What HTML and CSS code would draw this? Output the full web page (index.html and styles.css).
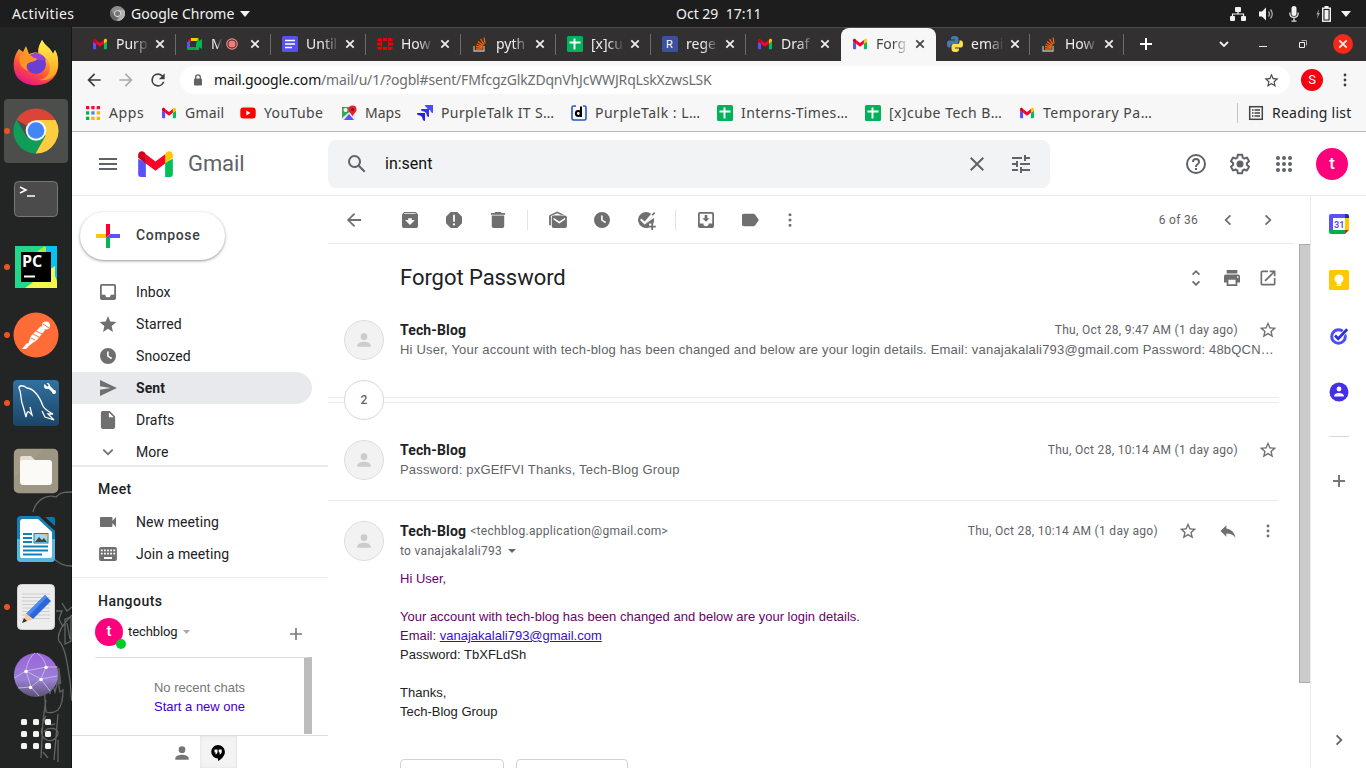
FILE: index.html
```html
<!DOCTYPE html>
<html lang="en">
<head>
<meta charset="utf-8">
<title>Forgot Password - Gmail</title>
<link rel="stylesheet" href="styles.css">
</head>
<body>
<svg class="defs" aria-hidden="true">
  <symbol id="gmail" viewBox="0 0 36 27"><path fill="#5b52f5" d="M0 8v16.500Q0 27 2.500 27H8V12z"/><path fill="#00c05a" d="M28 12v15h5.500Q36 27 36 24.500V8z"/><path fill="#ffc800" d="M28 3.500V13l8-6V4c0-3.500-4-5-6.500-2.800z"/><path fill="#ff0028" d="M8 13V3.500l10 7.500 10-7.500V13l-10 7.500z"/><path fill="#d0001c" d="M0 4v3l8 6V3.500L6.500 1.200C4-1 0 .5 0 4z"/></symbol>
  <symbol id="sheet" viewBox="0 0 16 16"><rect width="16" height="16" rx="1.500" fill="#00b35a"/><path d="M2.500 6.500h11M7.500 2.500v11" stroke="#fff" stroke-width="1.900"/></symbol>
  <symbol id="so" viewBox="0 0 16 16"><path d="M2 10v5h10v-5" fill="none" stroke="#b5b5b5" stroke-width="1.300"/><path d="M4 13h6.500M4 10.500l6.500 1M4.700 8l6 2.500M6 5.500l5.300 4M8.500 3l3.500 5.300M12 1.500l1 6" stroke="#f4660c" stroke-width="1.300"/></symbol>
  <symbol id="x" viewBox="0 0 10 10"><path d="M1.300 1.300l7.400 7.400M8.700 1.300L1.300 8.700" stroke="currentColor" stroke-width="1.800"/></symbol>
  <symbol id="star" viewBox="0 0 24 24"><path d="M22 9.240l-7.190-.62L12 2 9.190 8.630 2 9.240l5.460 4.730L5.820 21 12 17.270 18.180 21l-1.630-7.030L22 9.240zM12 15.400l-3.760 2.270 1-4.280-3.320-2.880 4.380-.38L12 6.100l1.710 4.040 4.380.38-3.320 2.880 1 4.280L12 15.400z"/></symbol>
  <symbol id="dots" viewBox="0 0 24 24"><path d="M12 7.700a1.700 1.700 0 1 0 0-3.400 1.700 1.700 0 0 0 0 3.400zm0 2.600a1.700 1.700 0 1 0 0 3.400 1.700 1.700 0 0 0 0-3.400zm0 6a1.700 1.700 0 1 0 0 3.400 1.700 1.700 0 0 0 0-3.400z"/></symbol>
  <symbol id="clock" viewBox="0 0 24 24"><path d="M12 3a9 9 0 1 0 0 18 9 9 0 0 0 0-18zm3.700 12.600L11 12.700V7h1.800v4.800l3.800 2.300z"/></symbol>
  <symbol id="person" viewBox="0 0 24 24"><path d="M12 12a4 4 0 1 0 0-8 4 4 0 0 0 0 8zm0 2c-2.670 0-8 1.340-8 4v2h16v-2c0-2.660-5.330-4-8-4z"/></symbol>
  <symbol id="right" viewBox="0 0 24 24"><path d="M10 6L8.590 7.410 13.170 12l-4.580 4.590L10 18l6-6z"/></symbol>
  <symbol id="back" viewBox="0 0 24 24"><path d="M20 11H7.830l5.590-5.590L12 4l-8 8 8 8 1.410-1.410L7.830 13H20v-2z"/></symbol>
</svg>

<header class="topbar">
  <span class="activities">Activities</span>
  <div class="appmenu">
    <svg width="15" height="15" viewBox="0 0 16 16"><circle cx="8" cy="8" r="8" fill="#8d8d8d"/><path d="M8 4h7a8 8 0 0 1-7 12l3.500-6z" fill="#b5b5b5"/><path d="M1 4.500L4.800 10 8 12l-1 4A8 8 0 0 1 1 4.500z" fill="#666"/><circle cx="8" cy="8" r="3.600" fill="#ddd"/><circle cx="8" cy="8" r="2.700" fill="#777"/></svg>
    <span>Google Chrome</span>
    <svg width="10" height="6" viewBox="0 0 10 6"><path d="M0 0h10L5 6z" fill="#f2f2f2"/></svg>
  </div>
  <time class="clock">Oct 29&nbsp; 17:11</time>
  <div class="tray">
    <svg width="16" height="14" viewBox="0 0 16 14" fill="#f2f2f2"><rect x="5" width="6" height="5" rx="1"/><rect y="9" width="5" height="5" rx="1"/><rect x="11" y="9" width="5" height="5" rx="1"/><path d="M8 4v3M2.500 10V7h11v3" fill="none" stroke="#f2f2f2" stroke-width="1.200"/></svg>
    <svg width="16" height="14" viewBox="0 0 16 14"><path d="M0 4.500h3L7 .5v13l-4-4H0z" fill="#f2f2f2"/><path d="M9.500 4.500q2 2.500 0 5M11.500 2.500q3.500 4.500 0 9" fill="none" stroke="#aaa" stroke-width="1.300"/></svg>
    <svg width="10" height="16" viewBox="0 0 10 16"><rect x="2.500" width="5" height="10" rx="2.500" fill="#f2f2f2"/><path d="M.8 6.500q0 5 4.200 5t4.200-5M5 11.500V15M2.500 15.200h5" fill="none" stroke="#ddd" stroke-width="1.300"/></svg>
    <svg width="15" height="16" viewBox="0 0 15 16"><path d="M3 3L.3 8.500h1.500L1 13l3-6H2.500z" fill="#999"/><rect x="6.700" y="2.200" width="7.600" height="13" fill="none" stroke="#f2f2f2" stroke-width="1.400"/><path d="M8.500 4h4v9.500h-4zM8.500 0h4v2h-4z" fill="#f2f2f2"/></svg>
    <svg width="10" height="6" viewBox="0 0 10 6"><path d="M0 0h10L5 6z" fill="#f2f2f2"/></svg>
  </div>
</header>

<div class="desktop">
  <nav class="dock">
    <svg class="doodle" width="72" height="280" viewBox="0 0 72 280" fill="none" stroke="#626562" stroke-width="1.300"><path transform="translate(0 -14)" d="M33 38C36 26 46 20 56 23c4-5 9-5 16-5"/><path transform="translate(0 -7)" d="M54 78c6 5 10 7 18 7M62 122l5 8 5-4M56 130l6 0-3 8 4 8M72 134c-8 8-16 18-13 26 6 6 8 20 11 40 1 8 1 16 2 20M65 138l6-2v24l-6 3zM67 142l3 16"/><path d="M46 212l-3 20-2 38M58 226l-4 46M55 236c-8 2-14-2-9-8M42 240c-4 12 12 18 16 6 1-6-10-8-14-2M43 264l5 6M58 252v22"/><path d="M45 212q-1-14 3-16l2 10 2-12 3 10 3-12 2 12 3-2q0 14-5 20-6 4-12 2z"/><path d="M56 178l3 18M58 180l2 16" stroke-width="3" stroke="#5a5d59"/></svg>
    <div class="dock-item"><svg width="46" height="46" viewBox="0 0 46 46"><defs><linearGradient id="ff" x1=".8" y1="0" x2=".3" y2="1"><stop offset="0" stop-color="#fff44f"/><stop offset=".4" stop-color="#ffa32b"/><stop offset=".7" stop-color="#ff4b3e"/><stop offset="1" stop-color="#e3148b"/></linearGradient><linearGradient id="fy" x1=".5" y1="0" x2=".5" y2="1"><stop offset="0" stop-color="#fff44f"/><stop offset="1" stop-color="#ff9a1f"/></linearGradient></defs><path d="M6 9l4 3 3-6 3 8c3-1 6-2 9-1C25 7 28 3 29 0c3 6 9 8 11 14l2-4c4 8 5 20-1 27C33 48 12 48 4 37-2 28 1 15 6 9z" fill="url(#ff)"/><path d="M29 0c-2 4-5 8-2 13 4 4 10 7 10 15 0 7-5 11-11 12 10 2 20-5 19-18 0-5-1-9-3-12l-2 4C38 8 32 6 29 0z" fill="url(#fy)"/><circle cx="23" cy="24" r="10" fill="#6a3fd4"/><path d="M14 21c6-3 12 0 19-1-1-4-6-7-11-7-5 1-8 4-8 8z" fill="#9644dd"/><path d="M7 16c5-3 10-2 14 2 3 0 4 1 1 3-3 1-7 1-8 4-1 2 0 4 1 6C9 29 5 23 7 16z" fill="#ff9424"/></svg></div>
    <div class="dock-item active run"><svg width="46" height="46" viewBox="0 0 46 46"><path d="M23 23L3.500 11.700A22.500 22.500 0 0 1 42.500 12z" fill="#db4437"/><path d="M23 23l-9.500 5.500L3.500 11.700A22.500 22.500 0 0 0 22.500 45.500L33 28z" fill="#0f9d58"/><path d="M23 12h19.500A22.500 22.500 0 0 1 22.500 45.500L32.500 28z" fill="#ffcd40"/><circle cx="23" cy="22.500" r="10.300" fill="#f4f4f4"/><circle cx="23" cy="22.500" r="8.300" fill="#4285f4"/></svg></div>
    <div class="dock-item"><svg width="46" height="38" viewBox="0 0 46 38"><rect x="1.500" y="1.500" width="43" height="35" rx="4" fill="#4b4b4b" stroke="#777" stroke-width="1"/><path d="M7 7l6 3-6 3M14 16h8" fill="none" stroke="#fff" stroke-width="1.600"/></svg></div>
    <div class="dock-item run"><svg width="42" height="42" viewBox="0 0 42 42"><path d="M0 0h42v42H0z" fill="#21d789"/><path d="M18 8L30 0l12 20v10H20z" fill="#a7e84b"/><path d="M31 0h11v36L31 6z" fill="#07c3f2"/><path d="M10 42l30-22v10l2 5v7z" fill="#f5f84a"/><path d="M6 6h30v30H6z"/><text x="7" y="20.500" class="pc">PC</text><path d="M9 29.500h11v2H9z" fill="#fff"/></svg></div>
    <div class="dock-item run"><svg width="46" height="46" viewBox="0 0 46 46"><circle cx="23" cy="23" r="22.500" fill="#ff6c37"/><circle cx="33" cy="13.500" r="4" fill="#fff"/><path d="M28 14l-10 10-3 8 2 1 7-5 8-10zM14 31l-5 6h4l4-4z" fill="#fff"/><path d="M20 22l6 3M23 19l6 3M18 26l4 2M30 12l6 4" stroke="#ff6c37" stroke-width="1"/></svg></div>
    <div class="dock-item run"><svg width="46" height="46" viewBox="0 0 46 46"><defs><linearGradient id="my" x1="0" y1="0" x2="0" y2="1"><stop offset="0" stop-color="#31719f"/><stop offset="1" stop-color="#1c4468"/></linearGradient></defs><rect x="0" y="0" width="46" height="46" rx="4" fill="url(#my)"/><path d="M13 37l-3-11c-3-6-1-12-4-18 0-3 4-3 8 0 8 1 13 10 16 18 2 4 6 6 10 8l-5 0 6 6-9-3-3-6M13 37c1-4 1-6 3-5l3 3-2-8" fill="none" stroke="#fff" stroke-width="1.300"/><path d="M34 5l7 7" stroke="#fff" stroke-width="3"/><circle cx="34" cy="6" r="3" fill="#fff"/><circle cx="41" cy="12" r="2" fill="#fff"/><path d="M31 2l4 4" stroke="#2d6a97" stroke-width="2"/></svg></div>
    <div class="dock-item"><svg width="46" height="46" viewBox="0 0 46 46"><rect x=".8" y=".8" width="44.400" height="44.400" rx="5" fill="#a39a88"/><path d="M1 30L30 1h12l3 3v37l-4 4H5l-4-4z" fill="#9a917f" opacity=".5"/><path d="M7 10q0-2 2-2h9l4 4h15v8H7z" fill="#e5dfd1"/><rect x="7" y="12" width="32" height="25" rx="3" fill="#fcfaf7"/></svg></div>
    <div class="dock-item"><svg width="38" height="46" viewBox="0 0 38 46"><path d="M4 0h18l16 15v27q0 4-4 4H4q-4 0-4-4V4q0-4 4-4z" fill="#1680b6"/><path d="M0 23h38v19q0 4-4 4H4q-4 0-4-4z" fill="#58b6df"/><path d="M28 1h8q2 0 2 2v7z" fill="#0b76ac"/><path d="M6 3h15l14 13v24q0 2-2 2H6q-3 0-3-2V6q0-3 3-3z" fill="#fff"/><path d="M6 18h9M6 22h9M6 26h9M6 30.500h25M6 34.500h25M6 38.500h19" stroke="#1680b6" stroke-width="1.800"/><rect x="17" y="17.500" width="14" height="9.500" fill="#a8d5ec" stroke="#1680b6"/><path d="M18 26l4-5 3 3 2-2 3 4z" fill="#444"/><path d="M27 18h3.500v3z" fill="#f5b82e"/></svg></div>
    <div class="dock-item run"><svg width="38" height="46" viewBox="0 0 38 46"><rect x=".5" y=".5" width="37" height="45" rx="4" fill="#ededed" stroke="#d2d2d2"/><path d="M5 10h28M5 13.500h28M5 17h28M5 20.500h28M5 24h28M5 27.500h28M5 31h28M5 34.500h28" stroke="#ccc"/><path d="M28 11l6 6-18 18-7-5z" fill="#2c67d8"/><path d="M28 11l2 2-19 20-2-3z" fill="#4c8af0"/><path d="M9 29.500l7 5.500-10 4z" fill="#f8cca0"/><path d="M5 39l2-5 3 3z" fill="#333"/></svg></div>
    <div class="dock-item"><svg width="46" height="46" viewBox="0 0 46 46"><defs><linearGradient id="gl" x1="0" y1="0" x2="0" y2="1"><stop offset="0" stop-color="#9b64da"/><stop offset=".6" stop-color="#9a80d6"/><stop offset="1" stop-color="#5b5270"/></linearGradient></defs><circle cx="23" cy="23" r="22" fill="url(#gl)"/><path d="M1 26l12-7L33 15l11 0M13 19l5 16 10-8 5-12M13 19l15 8 16-3M13 19C14 10 18 4 22 1M33 15C32 8 28 4 24 1M18 35l-13 1M18 35l8 9M28 27l9 12" fill="none" stroke="#cbb8ee" stroke-width=".9"/><g fill="#fff"><circle cx="13" cy="19.500" r="1.800"/><circle cx="33" cy="15.500" r="1.800"/><circle cx="28" cy="27.500" r="1.800"/><circle cx="17.500" cy="35.500" r="1.800"/></g></svg></div>
    <div class="dock-item launcher"><svg width="30" height="30" viewBox="0 0 30 30" fill="#f3f3f1"><rect width="6" height="6" rx="1.500"/><rect x="12" width="6" height="6" rx="1.500"/><rect x="24" width="6" height="6" rx="1.500"/><rect y="12" width="6" height="6" rx="1.500"/><rect x="12" y="12" width="6" height="6" rx="1.500"/><rect x="24" y="12" width="6" height="6" rx="1.500"/><rect y="24" width="6" height="6" rx="1.500"/><rect x="12" y="24" width="6" height="6" rx="1.500"/><rect x="24" y="24" width="6" height="6" rx="1.500"/></svg></div>
  </nav>

  <div class="browser">
    <div class="tabs">
      <div class="tab"><svg class="fav"><use href="#gmail" x="1" y="2" width="14" height="12"/></svg><span>Purp</span><svg class="close"><use href="#x"/></svg></div>
      <div class="tab"><svg class="fav" viewBox="0 0 16 16"><path d="M4 2h7v3H4z" fill="#ffc800"/><path d="M0 6l4-4v4z" fill="#f0102b"/><path d="M0 6h3v5H0z" fill="#5b52f5"/><path d="M3 11h8v3H1q-1 0-1-1v-2z" fill="#00a84d"/><path d="M11 2q1 0 1 1v2l3-2v10l-3-2v2q0 1-1 1H9V8z" fill="#00b852"/></svg><span class="meet-title">M</span><svg class="rec" viewBox="0 0 12 12"><circle cx="6" cy="6" r="5.200" fill="none" stroke="#f28b82" stroke-width="1.200"/><circle cx="6" cy="6" r="3.500" fill="#f97a78"/></svg><svg class="close"><use href="#x"/></svg></div>
      <div class="tab"><svg class="fav" viewBox="0 0 16 16"><rect width="16" height="16" rx="1.500" fill="#5850ee"/><path d="M3 4.500h10M3 8h10M3 11.500h7" stroke="#fff" stroke-width="1.600"/></svg><span>Until</span><svg class="close"><use href="#x"/></svg></div>
      <div class="tab"><svg class="fav" viewBox="0 0 16 16"><path d="M6 2h4v3H6zM6 11h4v3H6zM0 6.500h4v3H0zM12 6.500h4v3h-4zM0 5q0-3 4-3v3zM12 2q4 0 4 3h-4zM0 11h4v3Q0 14 0 11zM12 11h4q0 3-4 3z" fill="#f00000"/><path d="M4.500 2v12M11.500 2v12" stroke="#f00000"/></svg><span>How</span><svg class="close"><use href="#x"/></svg></div>
      <div class="tab"><svg class="fav"><use href="#so"/></svg><span>pyth</span><svg class="close"><use href="#x"/></svg></div>
      <div class="tab"><svg class="fav"><use href="#sheet"/></svg><span>[x]cu</span><svg class="close"><use href="#x"/></svg></div>
      <div class="tab"><svg class="fav" viewBox="0 0 16 16"><rect width="16" height="16" rx="1.500" fill="#3d50a0"/><text x="4" y="12" class="fav-r">R</text></svg><span>rege</span><svg class="close"><use href="#x"/></svg></div>
      <div class="tab nosep"><svg class="fav"><use href="#gmail" x="1" y="2" width="14" height="12"/></svg><span>Draf</span><svg class="close"><use href="#x"/></svg></div>
      <div class="tab selected"><svg class="fav"><use href="#gmail" x="1" y="2" width="14" height="12"/></svg><span>Forg</span><svg class="close"><use href="#x"/></svg></div>
      <div class="tab after"><svg class="fav" viewBox="0 0 16 16"><path d="M8 0c-4 0-4 1.500-4 3.500h4v1H2Q0 4.500 0 8t2 3.500h1.500V10q0-2 2-2h4Q11.500 8 11.500 6V3Q11.500 0 8 0z" fill="#3f7cb0"/><path d="M8 16c4 0 4-1.500 4-3.500H8v-1h6q2 0 2-3.500t-2-3.500h-1.500V6q0 2-2 2h-4q-2 0-2 2v3Q4.500 16 8 16z" fill="#ffdf50"/></svg><span>emai</span><svg class="close"><use href="#x"/></svg></div>
      <div class="tab last"><svg class="fav"><use href="#so"/></svg><span>How</span><svg class="close"><use href="#x"/></svg></div>
      <svg class="newtab" width="12" height="12" viewBox="0 0 12 12"><path d="M6 0v12M0 6h12" stroke="#fff" stroke-width="2"/></svg>
      <div class="winctl">
        <svg width="10" height="7" viewBox="0 0 10 7"><path d="M1 1l4 4 4-4" fill="none" stroke="#eee" stroke-width="1.900"/></svg>
        <svg width="8" height="6" viewBox="0 0 8 6"><path d="M0 5.500h8" stroke="#eee"/></svg>
        <svg width="8" height="8" viewBox="0 0 8 8"><path d="M.5 2.500h5v5h-5z" fill="none" stroke="#eee"/><path d="M2.500.5h5v5" fill="none" stroke="#aaa"/></svg>
        <div class="winclose"><svg width="10" height="10"><use href="#x"/></svg></div>
      </div>
    </div>

    <div class="addressbar">
      <svg class="nav-ico" viewBox="0 0 24 24"><use href="#back" width="24" height="24"/></svg>
      <svg class="nav-ico dim" viewBox="0 0 24 24"><use href="#back" width="24" height="24" transform="matrix(-1 0 0 1 24 0)"/></svg>
      <svg class="nav-ico" viewBox="0 0 24 24"><path d="M17.650 6.350A7.950 7.950 0 0 0 12 4a8 8 0 1 0 7.730 10h-2.080A6 6 0 1 1 12 6c1.660 0 3.140.69 4.220 1.780L13 11h7V4l-2.350 2.350z"/></svg>
      <div class="omnibox">
        <svg width="8" height="12" viewBox="0 0 8 12"><rect y="4.500" width="8" height="7" rx="1" fill="#5f6368"/><path d="M1.700 5V3q0-2.200 2.300-2.200T6.300 3v2" fill="none" stroke="#5f6368" stroke-width="1.300"/></svg>
        <span class="url"><b>mail.google.com</b>/mail/u/1/?ogbl#sent/FMfcgzGlkZDqnVhJcWWJRqLskXzwsLSK</span>
        <svg class="bm-star" width="17" height="17"><use href="#star"/></svg>
      </div>
      <div class="profile">S</div>
      <svg class="menu" width="20" height="20"><use href="#dots"/></svg>
    </div>

    <div class="bookmarks">
      <div class="bm w-apps"><svg viewBox="0 0 16 16"><path d="M1 1h3.300v3.300H1zM6.300 1h3.300v3.300H6.300zM11.700 1H15v3.300h-3.300z" fill="#f0102b"/><path d="M1 6.300h3.300v3.300H1z" fill="#00b050"/><path d="M6.300 6.300h3.300v3.300H6.300z" fill="#4285f4"/><path d="M11.700 6.300H15v3.300h-3.300zM6.300 11.700h3.300V15H6.300zM11.700 11.700H15V15h-3.300z" fill="#fbb400"/><path d="M1 11.700h3.300V15H1z" fill="#00b050"/></svg><span>Apps</span></div>
      <div class="bm w-gm"><svg><use href="#gmail" x="1" y="2" width="14" height="12"/></svg><span>Gmail</span></div>
      <div class="bm w-yt"><svg viewBox="0 0 16 16"><rect x=".3" y="2.500" width="15.400" height="11" rx="3" fill="#f00"/><path d="M6.300 5.500v5l4.200-2.500z" fill="#fff"/></svg><span>YouTube</span></div>
      <div class="bm w-mp"><svg viewBox="0 0 16 16"><path d="M1 2h12v12H1z" fill="#31a853"/><path d="M1 13L12 4l2 9v2H2z" fill="#e6e6e6"/><path d="M3 15l5-6 5 6z" fill="#5b52f5"/><circle cx="4.500" cy="5" r="2" fill="#fff"/><path d="M7.500 4.500a4 4 0 0 1 8 0c0 3-3 4-4 7-1-3-4-4-4-7z" fill="#ee1c32"/><circle cx="11.500" cy="4.500" r="1.500" fill="#7c0a14"/></svg><span>Maps</span></div>
      <div class="bm w-pt"><svg viewBox="0 0 16 16"><path d="M8 0h8v8q-2.500 0-2.500-3V2.500H11Q8 2.500 8 0z" fill="#4b4bff"/><path d="M9 1h6v6l-2-2h-2z" fill="#4b4bff"/><path d="M4 4h8v8q-2.500 0-2.500-3V6.500H7Q4 6.500 4 4z" fill="#3432ef"/><path d="M6 5h5v6l-2-3z" fill="#3432ef"/><path d="M0 8h8v8q-2.500 0-2.500-3v-2.500H3Q0 10.500 0 8z" fill="#2b20d8"/><path d="M2 9h5v6l-2-3z" fill="#2b20d8"/></svg><span>PurpleTalk IT S…</span></div>
      <div class="bm w-d"><svg viewBox="0 0 16 16"><path d="M5 1H2.500Q1 1 1 2.500v11Q1 15 2.500 15h11q1.500 0 1.500-1.500v-11Q15 1 13.500 1H12" fill="none" stroke="#2557c6" stroke-width="1.600"/><circle cx="7.300" cy="8.500" r="2.400" fill="none" stroke="#000" stroke-width="2"/><path d="M10 1.500v10.500" stroke="#000" stroke-width="2"/></svg><span>PurpleTalk : L…</span></div>
      <div class="bm w-sh"><svg><use href="#sheet"/></svg><span>Interns-Times…</span></div>
      <div class="bm w-cu"><svg><use href="#sheet"/></svg><span>[x]cube Tech B…</span></div>
      <div class="bm w-tp"><svg><use href="#gmail" x="1" y="2" width="14" height="12"/></svg><span>Temporary Pa…</span></div>
      <div class="bm reading"><svg viewBox="0 0 16 16"><rect x="1.700" y="1.700" width="12.600" height="12.600" fill="none" stroke="#444" stroke-width="1.500"/><path d="M4 5h1.500M6.500 5H12M4 8h1.500M6.500 8H12M4 11h1.500M6.500 11H12" stroke="#444" stroke-width="1.300"/></svg><span>Reading list</span></div>
    </div>

    <div class="gmail">
      <header class="ghead">
        <svg class="burger" width="18" height="12" viewBox="0 0 18 12"><path d="M0 1h18M0 6h18M0 11h18" stroke="#5f6368" stroke-width="2"/></svg>
        <svg class="logo" width="35" height="26"><use href="#gmail"/></svg>
        <span class="brand">Gmail</span>
        <div class="search">
          <svg width="24" height="24" viewBox="0 0 24 24"><path d="M20.490 19l-5.730-5.730C15.530 12.200 16 10.910 16 9.500A6.500 6.500 0 1 0 9.500 16c1.410 0 2.700-.47 3.770-1.240L19 20.490 20.490 19zM5 9.500a4.500 4.500 0 1 1 9 0 4.500 4.500 0 0 1-9 0z"/></svg>
          <span>in:sent</span>
          <svg width="24" height="24" viewBox="0 0 24 24"><path d="M19 6.410L17.590 5 12 10.590 6.410 5 5 6.410 10.590 12 5 17.590 6.410 19 12 13.410 17.590 19 19 17.590 13.410 12z"/></svg>
          <svg class="tune" width="24" height="24" viewBox="0 0 24 24"><path d="M3 17v2h6v-2H3zM3 5v2h10V5H3zm10 16v-2h8v-2h-8v-2h-2v6h2zM7 9v2H3v2h4v2h2V9H7zm14 4v-2H11v2h10zm-6-4h2V7h4V5h-4V3h-2v6z"/></svg>
        </div>
        <div class="gtools">
          <div><svg width="24" height="24" viewBox="0 0 24 24"><path d="M11 18h2v-2h-2v2zm1-16a10 10 0 1 0 0 20 10 10 0 0 0 0-20zm0 18a8 8 0 1 1 0-16 8 8 0 0 1 0 16zm0-14a4 4 0 0 0-4 4h2a2 2 0 1 1 4 0c0 2-3 1.750-3 5h2c0-2.250 3-2.500 3-5a4 4 0 0 0-4-4z"/></svg></div>
          <div><svg width="24" height="24" viewBox="0 0 24 24"><path d="M13.850 22.250h-3.700c-.74 0-1.360-.54-1.450-1.270l-.27-1.890c-.27-.14-.53-.29-.79-.46l-1.800.72c-.7.26-1.470-.03-1.810-.65L2.200 15.530c-.35-.66-.2-1.440.36-1.880l1.530-1.190c-.01-.15-.02-.3-.02-.46 0-.15.01-.31.02-.46l-1.520-1.190c-.59-.45-.74-1.260-.37-1.880l1.850-3.190c.34-.62 1.110-.9 1.790-.63l1.810.73c.26-.17.52-.32.78-.46l.27-1.910c.09-.7.710-1.250 1.440-1.250h3.700c.74 0 1.360.54 1.450 1.270l.27 1.890c.27.14.53.29.79.46l1.800-.72c.71-.26 1.480.03 1.820.65l1.840 3.180c.36.66.2 1.440-.36 1.880l-1.520 1.190c.01.15.02.3.02.46s-.01.31-.02.46l1.520 1.190c.56.45.72 1.230.37 1.860l-1.860 3.220c-.34.62-1.110.9-1.800.63l-1.800-.72c-.26.17-.52.32-.78.46l-.27 1.910c-.1.680-.72 1.220-1.460 1.220zm-3.230-2h2.760l.37-2.550.53-.22c.44-.18.88-.44 1.340-.78l.45-.34 2.380.96 1.380-2.400-2.030-1.580.07-.56c.03-.26.06-.51.06-.78s-.03-.53-.06-.78l-.07-.56 2.030-1.580-1.390-2.400-2.390.96-.45-.35c-.42-.32-.87-.58-1.330-.77l-.52-.22-.37-2.550h-2.760l-.37 2.550-.53.210c-.44.190-.88.440-1.340.790l-.45.330-2.380-.95-1.390 2.390 2.030 1.580-.07.560a7 7 0 0 0-.06.790c0 .26.02.53.06.780l.07.560-2.030 1.580 1.380 2.400 2.390-.96.45.350c.43.330.86.580 1.330.770l.53.220.38 2.550z"/><circle cx="12" cy="12" r="3.500"/></svg></div>
          <div><svg width="16" height="16" viewBox="0 0 16 16"><g id="r3"><circle cx="2" cy="2" r="2"/><circle cx="8" cy="2" r="2"/><circle cx="14" cy="2" r="2"/></g><use href="#r3" y="6"/><use href="#r3" y="12"/></svg></div>
          <div class="me">t</div>
        </div>
      </header>

      <div class="gbody">
        <aside class="side">
          <button class="compose"><svg width="24" height="24" viewBox="0 0 24 24"><path d="M10 0h4v10l-4 4z" fill="#ff0028"/><path d="M0 10h10v4H0z" fill="#ffc800"/><path d="M14 10h10v4H10z" fill="#5b52f5"/><path d="M10 14h4v10h-4z" fill="#00b852"/></svg><span>Compose</span></button>
          <nav class="folders">
            <a><svg viewBox="0.750 0.750 22.500 22.500"><path d="M19 3H5a2 2 0 0 0-2 2v14a2 2 0 0 0 2 2h14a2 2 0 0 0 2-2V5a2 2 0 0 0-2-2zm0 12h-4a3 3 0 0 1-6 0H5V5h14v10z"/></svg>Inbox</a>
            <a><svg viewBox="0.750 0.750 22.500 22.500"><path d="M12 17.270L17.560 21l-1.480-6.700L21.500 9.800l-7-.6L12 3 9.500 9.200l-7 .6 5.420 4.500L6.440 21z"/></svg>Starred</a>
            <a><svg viewBox="0.750 0.750 22.500 22.500"><use href="#clock" width="24" height="24"/></svg>Snoozed</a>
            <a class="on"><svg viewBox="0.750 0.750 22.500 22.500"><path d="M3 21l19-9L3 3v7l12 2-12 2z"/></svg>Sent</a>
            <a><svg viewBox="0.750 0.750 22.500 22.500"><path d="M14 2H6a2 2 0 0 0-2 2v16a2 2 0 0 0 2 2h12a2 2 0 0 0 2-2V8l-6-6zm-1 7V3.500L18.500 9H13z"/></svg>Drafts</a>
            <a><svg viewBox="0.750 0.750 22.500 22.500"><use href="#right" width="24" height="24" transform="rotate(90 12 12)"/></svg>More</a>
          </nav>
          <section class="meet">
            <h3>Meet</h3>
            <a><svg viewBox="0.750 0.750 22.500 22.500"><path d="M17 10.500V7.400Q17 6.300 15.900 6.300H4.100Q3 6.300 3 7.400v9.200q0 1.100 1.100 1.100h11.800q1.100 0 1.100-1.100v-3.100l4 4v-11z"/></svg>New meeting</a>
            <a><svg viewBox="0.750 0.750 22.500 22.500"><path d="M20 4H4a2 2 0 0 0-2 2v12a2 2 0 0 0 2 2h16a2 2 0 0 0 2-2V6a2 2 0 0 0-2-2zm-9 3h2v2h-2V7zm0 3.500h2v2h-2v-2zM7.500 7h2v2h-2V7zm0 3.500h2v2h-2v-2zM6 12.500H4v-2h2v2zM6 9H4V7h2v2zm10.500 8.500h-9v-2h9v2zm0-5h-2v-2h2v2zm0-3.500h-2V7h2v2zm3.500 3.500h-2v-2h2v2zM20 9h-2V7h2v2z"/></svg>Join a meeting</a>
          </section>
          <section class="hang">
            <h3>Hangouts</h3>
            <div class="who"><div class="av">t<i></i></div><span>techblog</span><svg width="7" height="4" viewBox="0 0 7 4"><path d="M0 0h7L3.500 4z" fill="#aaa"/></svg><svg class="add" width="12" height="12" viewBox="0 0 12 12"><path d="M6 0v12M0 6h12" stroke="#777" stroke-width="1.600"/></svg></div>
            <div class="chats"><p>No recent chats<br><a>Start a new one</a></p></div>
          </section>
          <footer class="sfoot">
            <div><svg width="20" height="20" fill="#757575"><use href="#person"/></svg></div>
            <div class="cur"><svg width="14" height="16" viewBox="0 0 14 16"><path d="M7 0a6.800 6.800 0 0 0 0 13.600V16c4-2 6.900-5.500 6.900-9.200A6.900 6.900 0 0 0 7 0z"/><path d="M3.500 4.500h3v3L5.300 9.300H4.100L5 7.500H3.500zM7.700 4.500h3v3L9.500 9.300H8.300l.9-1.800H7.700z" fill="#fff"/></svg></div>
          </footer>
        </aside>

        <main class="mail">
          <div class="mtools">
            <div class="c"><svg viewBox="0.750 0.750 22.500 22.500"><use href="#back" width="24" height="24"/></svg></div>
            <div class="c first"><svg viewBox="0.750 0.750 22.500 22.500"><path d="M20.540 5.230l-1.390-1.680C18.880 3.210 18.470 3 18 3H6c-.47 0-.88.210-1.160.550L3.460 5.230C3.170 5.570 3 6.020 3 6.500V19a2 2 0 0 0 2 2h14a2 2 0 0 0 2-2V6.500c0-.48-.17-.93-.46-1.270zM12 17.500L6.500 12H10v-2h4v2h3.500L12 17.500zM5.120 5l.81-1h12l.94 1H5.120z"/></svg></div>
            <div class="c"><svg viewBox="0.750 0.750 22.500 22.500"><path d="M15.730 3H8.270L3 8.270v7.460L8.270 21h7.460L21 15.730V8.270L15.730 3zM12 18.300a1.300 1.300 0 1 1 0-2.600 1.300 1.300 0 0 1 0 2.600zm1-4.300h-2V6h2v8z"/></svg></div>
            <div class="c"><svg viewBox="0.750 0.750 22.500 22.500"><path d="M5 19a2 2 0 0 0 2 2h10a2 2 0 0 0 2-2V7H5v12zM20 4h-4l-1-1H9L8 4H4v2h16V4z"/></svg></div>
            <div class="sep"></div>
            <div class="c"><svg viewBox="0.750 0.750 22.500 22.500"><path d="M20 7H7a2 2 0 0 0-2 2v10a2 2 0 0 0 2 2h13a2 2 0 0 0 2-2V9a2 2 0 0 0-2-2zm0 4.500L13.500 16 7 11.500v-2l6.500 4.300L20 9.500z"/><path d="M2 18V8q0-1 1-1.600L11 2.500l8 3.500h-4l-4-1.700L4 7.500V18z"/></svg></div>
            <div class="c"><svg viewBox="0.750 0.750 22.500 22.500"><use href="#clock" width="24" height="24"/></svg></div>
            <div class="c"><svg viewBox="0.750 0.750 22.500 22.500"><path d="M12 3a9 9 0 1 0 3.500 17.300V16h4.700a9 9 0 0 0 .6-6.200L10.500 17 5.500 12 7 10.500l3.500 3.500L17.800 5A9 9 0 0 0 12 3z"/><path d="M21 3l1.400 1.400L12 15.500 10.500 17l-1-1zM18 15.500h2v3h3v2h-3v3h-2v-3h-3v-2h3z"/><path d="M6.200 11.300l4.300 4.300L19 6.600" fill="none" stroke="#fff" stroke-width="2"/></svg></div>
            <div class="sep"></div>
            <div class="c"><svg viewBox="0.750 0.750 22.500 22.500"><path d="M19 3H5a2 2 0 0 0-2 2v14a2 2 0 0 0 2 2h14a2 2 0 0 0 2-2V5a2 2 0 0 0-2-2zm0 13h-4a3 3 0 0 1-6 0H5V5h14v11zm-3-6h-2.500V6.500h-3V10H8l4 4z"/></svg></div>
            <div class="c"><svg viewBox="0.750 0.750 22.500 22.500"><path d="M17.630 5.840C17.270 5.330 16.670 5 16 5H5a2 2 0 0 0-2 2v10a2 2 0 0 0 2 2h11c.67 0 1.270-.33 1.630-.84L22 12l-4.370-6.160z"/></svg></div>
            <div class="c narrow"><svg viewBox="0.750 0.750 22.500 22.500"><use href="#dots" width="24" height="24"/></svg></div>
            <span class="count">6 of 36</span>
            <div class="c pg"><svg viewBox="0.750 0.750 22.500 22.500"><use href="#right" width="24" height="24" transform="rotate(180 12 12)"/></svg></div>
            <div class="c pg"><svg viewBox="0.750 0.750 22.500 22.500"><use href="#right" width="24" height="24"/></svg></div>
          </div>
          <div class="scroller">
            <div class="thread">
              <div class="subject"><h2>Forgot Password</h2>
                <div class="c s"><svg viewBox="0.750 0.750 22.500 22.500"><path d="M12 5.830L15.170 9l1.410-1.410L12 3 7.410 7.590 8.830 9 12 5.830zm0 12.340L8.830 15l-1.410 1.410L12 21l4.590-4.590L15.170 15 12 18.170z"/></svg></div>
                <div class="c s"><svg viewBox="0.750 0.750 22.500 22.500"><path d="M19 8H5a2 2 0 0 0-2 2v7h3v4h12v-4h3v-7a2 2 0 0 0-2-2zm-3 11H8v-5h8v5zm2.500-7a1 1 0 1 1 0-2 1 1 0 0 1 0 2zM18 3H6v4h12V3z"/></svg></div>
                <div class="c s"><svg viewBox="0 0 24 24"><path d="M19 19H5V5h7V3H5a2 2 0 0 0-2 2v14a2 2 0 0 0 2 2h14a2 2 0 0 0 2-2v-7h-2v7zM14 3v2h3.590l-9.830 9.830 1.410 1.410L19 6.410V10h2V3h-7z"/></svg></div>
              </div>
              <article class="msg m1">
                <div class="avatar"><svg width="24" height="24"><use href="#person"/></svg></div>
                <div class="txt">
                  <div class="line"><b>Tech-Blog</b><time>Thu, Oct 28, 9:47 AM (1 day ago)</time><svg class="st"><use href="#star"/></svg></div>
                  <p class="snip">Hi User, Your account with tech-blog has been changed and below are your login details. Email: vanajakalali793@gmail.com Password: 48bQCN…</p>
                </div>
              </article>
              <div class="fold"><span>2</span></div>
              <article class="msg m2">
                <div class="avatar"><svg width="24" height="24"><use href="#person"/></svg></div>
                <div class="txt">
                  <div class="line"><b>Tech-Blog</b><time>Thu, Oct 28, 10:14 AM (1 day ago)</time><svg class="st"><use href="#star"/></svg></div>
                  <p class="snip">Password: pxGEfFVI Thanks, Tech-Blog Group</p>
                </div>
              </article>
              <article class="msg m3">
                <div class="avatar"><svg width="24" height="24"><use href="#person"/></svg></div>
                <div class="txt">
                  <div class="line"><b>Tech-Blog</b><span class="addr">&lt;techblog.application@gmail.com&gt;</span><time>Thu, Oct 28, 10:14 AM (1 day ago)</time><svg class="st"><use href="#star"/></svg><svg class="st" viewBox="0 0 24 24"><path d="M10 9V5l-7 7 7 7v-4.100c5 0 8.500 1.600 11 5.100-1-5-4-10-11-11z"/></svg><svg class="st"><use href="#dots"/></svg></div>
                  <div class="to">to vanajakalali793 <svg width="8" height="4" viewBox="0 0 8 4"><path d="M0 0h8L4 4z" fill="#666"/></svg></div>
                  <div class="body"><span class="q">Hi User,<br><br>Your account with tech-blog has been changed and below are your login details.<br>Email: <a>vanajakalali793@gmail.com</a></span><br>Password: TbXFLdSh<br><br>Thanks,<br>Tech-Blog Group</div>
                  <div class="replies"><div class="rb reply"></div><div class="rb forward"></div></div>
                </div>
              </article>
            </div>
            <div class="bar"><i></i></div>
          </div>
        </main>

        <aside class="addons">
          <svg viewBox="0 0 20 20"><path d="M2 0h14v4H4v12H0V2q0-2 2-2z" fill="#5b52f5"/><path d="M16 0h2q2 0 2 2v2h-4z" fill="#3025b8"/><path d="M16 4h4v12h-4z" fill="#ffc800"/><path d="M0 16h16v4H2q-2 0-2-2z" fill="#00b050"/><path d="M16 16h4l-4 4z" fill="#f0102b"/><path d="M4 4h12v12H4z" fill="#fff"/><text x="5" y="13.500" class="cal">31</text></svg>
          <svg viewBox="0 0 20 20"><rect width="20" height="20" rx="1.500" fill="#ffc800"/><path d="M10 4.500a4.300 4.300 0 0 0-2.300 8V14h4.600v-1.500A4.300 4.300 0 0 0 10 4.500zM7.700 14.500h4.600V16H7.700z" fill="#fff"/></svg>
          <svg viewBox="0 0 20 20"><circle cx="9.500" cy="10.500" r="6.800" fill="none" stroke="#4a4ef5" stroke-width="3"/><path d="M6 9.500l3.200 3.200 7-7.200" fill="none" stroke="#fff" stroke-width="4"/><path d="M6 9.500l3.200 3.200 9-9.500" fill="none" stroke="#322fd0" stroke-width="2.700"/></svg>
          <svg viewBox="0 0 20 20"><circle cx="10" cy="10" r="9.500" fill="#4430e8"/><circle cx="10" cy="7" r="2.400" fill="#fff"/><path d="M5 14.500q0-3.500 5-3.500t5 3.500z" fill="#fff"/></svg>
          <hr>
          <svg class="g1" viewBox="0 0 20 20"><path d="M10 4v12M4 10h12" stroke="#777" stroke-width="2"/></svg>
          <svg class="g2" viewBox="0.750 0.750 22.500 22.500"><use href="#right" width="24" height="24"/></svg>
        </aside>
      </div>
    </div>
  </div>
</div>
</body>
</html>
```
FILE: styles.css
```css
* { box-sizing: border-box; margin: 0; padding: 0; }
body { width: 1366px; height: 768px; overflow: hidden; background: #fff; font-family: Roboto, "Liberation Sans", sans-serif; }
svg { display: block; flex: none; }
.defs { position: absolute; width: 0; height: 0; }

/* system bar */
.topbar { height: 27px; background: #1d1d1d; color: #f2f2f2; display: grid; grid-template-columns: 110px 566px 1fr auto; align-items: center; font: 14px/27px "Noto Sans", sans-serif; white-space: nowrap; }
.activities { padding-left: 12px; letter-spacing: .4px; }
.appmenu { display: flex; align-items: center; gap: 6px; }
.tray { display: flex; align-items: center; padding-right: 15px; }
.tray svg:nth-child(2) { margin-left: 13px; }
.tray svg:nth-child(3) { margin-left: 14px; }
.tray svg:nth-child(4) { margin-left: 17px; }
.tray svg:nth-child(5) { margin-left: 10px; }

.desktop { display: flex; height: 741px; }

/* dock */
.dock { position: relative; width: 72px; background: #222523; padding-top: 4px; border-right: 1px solid #151515; flex: none; }
.doodle { position: absolute; left: 0; bottom: 0; }
.dock-item { position: relative; height: 64px; width: 64px; margin: 2px 0 4px 4px; display: flex; align-items: center; justify-content: center; border-radius: 4px; }
.dock-item:first-of-type { margin-top: 0; }
.dock-item.active { background: #4c4e4c; }
.dock-item.run::before { content: ""; position: absolute; left: 0; top: 29px; width: 6px; height: 6px; border-radius: 3px; background: #e95420; }
.dock-item.launcher { height: 54px; margin-top: -4px; }
.pc { font: bold 16px "Open Sans", sans-serif; fill: #fff; }

/* tab strip */
.browser { flex: 1; min-width: 0; display: flex; flex-direction: column; }
.tabs { height: 34px; background: #333031; border-top: 1px solid #4d4a4b; display: flex; align-items: center; padding-left: 9px; color: #eee; font: 14px/20px "Noto Sans", sans-serif; flex: none; }
.tab { width: 95px; height: 33px; display: flex; align-items: center; padding-left: 11px; padding-bottom: 1px; position: relative; flex: none; }
.tab::after { content: ""; position: absolute; right: 0; top: 6px; width: 1px; height: 21px; background: #6e6b6c; }
.tab.nosep::after, .tab.selected::after { display: none; }
.fav { width: 16px; height: 16px; margin-right: 8px; }
.tab span { width: 34px; white-space: nowrap; -webkit-mask-image: linear-gradient(90deg, #000 50%, transparent 98%); mask-image: linear-gradient(90deg, #000 50%, transparent 98%); }
.tab .meet-title { width: 11px; margin-right: 4px; flex: none; }
.rec { width: 12px; height: 12px; margin-right: 7px; }
.close { width: 10px; height: 10px; margin-left: 5px; }
.tab.selected { background: #f7f7f7; color: #444; border-radius: 8px 8px 0 0; }
.tab.after, .tab.last { width: 94px; }
.newtab { margin-left: 16px; margin-bottom: 1px; }
.winctl { margin-left: auto; display: flex; align-items: center; padding-right: 13px; padding-bottom: 1px; }
.winctl > :nth-child(2) { margin-left: 30px; }
.winctl > :nth-child(3) { margin-left: 32px; }
.winclose { width: 20px; height: 20px; border-radius: 10px; background: #f62817; margin-left: 26px; display: grid; place-items: center; }

/* address bar */
.addressbar { height: 38px; background: #f7f7f7; display: flex; align-items: center; padding-left: 12px; flex: none; }
.nav-ico { width: 20px; height: 20px; margin-right: 12px; fill: #3c4043; }
.nav-ico.dim { fill: #aaa; }
.omnibox { width: 1110px; height: 28px; border-radius: 14px; background: #fff; display: flex; align-items: center; padding-left: 14px; }
.url { margin-left: 12px; font: 14px/28px "Noto Sans", sans-serif; color: #6c6c70; letter-spacing: -.17px; }
.url b { font-weight: 400; color: #111; }
.bm-star { margin-left: auto; margin-right: 10px; fill: #444; }
.profile { width: 22px; height: 22px; margin-left: 11px; border-radius: 11px; background: #f60012; color: #fff; font: 13px/22px Roboto, sans-serif; text-align: center; }
.menu { margin-left: 12px; fill: #3c4043; }

/* bookmarks */
.bookmarks { height: 33px; background: #f7f7f7; border-bottom: 1px solid #bbb; display: flex; align-items: center; padding-left: 13px; color: #444; font: 14px/20px "Noto Sans", sans-serif; letter-spacing: .4px; white-space: nowrap; flex: none; padding-bottom: 5px; }
.bm { display: flex; align-items: center; gap: 8px; flex: none; }
.bm svg { width: 16px; height: 16px; }
.w-apps { width: 76px; letter-spacing: .6px; } .w-gm { width: 79px; letter-spacing: .2px; } .w-yt { width: 101px; } .w-mp { width: 76px; letter-spacing: 0; } .w-pt { width: 154px; } .w-d { width: 146px; letter-spacing: .5px; } .w-sh { width: 148px; } .w-cu { width: 154px; letter-spacing: .5px; } .w-tp { width: 218px; letter-spacing: .55px; }
.reading { border-left: 1px solid #c6c6c6; padding-left: 10px; color: #222; letter-spacing: .25px; }

/* gmail header */
.gmail { flex: 1; min-height: 0; display: flex; flex-direction: column; background: #fff; }
.ghead { height: 64px; border-bottom: 1px solid #ebebeb; display: flex; align-items: center; padding-left: 27px; flex: none; fill: #5f6368; }
.logo { margin-left: 21px; }
.brand { margin-left: 15px; width: 140px; font: 22px/30px Roboto, sans-serif; color: #5f6368; letter-spacing: -.1px; padding-top: 1px; }
.search { width: 722px; height: 48px; border-radius: 8px; background: #f1f3f4; display: flex; align-items: center; padding-left: 17px; }
.search span { flex: 1; margin-left: 16px; padding-top: 1px; font: 16px/24px Roboto, sans-serif; color: #111; }
.search .tune { margin: 0 17px 0 20px; }
.gtools { margin-left: auto; display: grid; grid-template-columns: 44px 44px 44px 52px; justify-items: center; align-items: center; margin-right: 8px; }
.me { width: 32px; height: 32px; border-radius: 16px; background: #ff007c; color: #fff; font: 500 17px/31px Roboto, sans-serif; text-align: center; }
.gbody { flex: 1; min-height: 0; display: flex; }

/* sidebar */
.side { width: 256px; flex: none; display: flex; flex-direction: column; color: #202124; }
.compose { margin: 16px 0 0 8px; width: 145px; height: 48px; flex: none; border: 0; border-radius: 24px; background: #fff; box-shadow: 0 1px 2px rgba(60,64,67,.35), 0 1px 3px 1px rgba(60,64,67,.16); display: flex; align-items: center; gap: 16px; padding-left: 16px; font: 500 14px/20px Roboto, sans-serif; letter-spacing: .65px; color: #3c4043; }
.compose span { padding-bottom: 2px; }
.folders { margin-top: 16px; height: 191px; overflow: hidden; border-bottom: 2px solid #ebebeb; flex: none; }
.side a { display: flex; align-items: center; }
.folders a, .meet a { height: 32px; width: 240px; padding-left: 26px; gap: 18px; font-size: 14px; letter-spacing: .08px; }
.side a svg { width: 20px; height: 20px; fill: #6f6f6f; }
.folders .on { background: #e8e9ed; border-radius: 0 16px 16px 0; font-weight: 700; }
.meet { height: 111px; border-bottom: 1px solid #ebebeb; flex: none; }
.side h3 { font: 500 14px/20px Roboto, sans-serif; letter-spacing: .45px; padding-left: 26px; }
.meet h3 { padding-top: 12px; margin-bottom: 7px; }
.hang { height: 158px; border-bottom: 1px solid #dedede; flex: none; }
.hang h3 { padding-top: 13px; }
.who { display: flex; align-items: center; height: 32px; margin: 5px 0 0 23px; font: 13px/18px Roboto, sans-serif; width: 207px; }
.who span { margin: 0 5px; padding-bottom: 1px; letter-spacing: -.1px; }
.av { position: relative; width: 28px; height: 28px; border-radius: 14px; background: #ff007c; color: #fff; font: 500 15px/27px Roboto, sans-serif; text-align: center; }
.av i { position: absolute; left: 21px; top: 21px; width: 10px; height: 10px; border-radius: 5px; background: #00cc2c; }
.add { margin: 4px 0 0 auto; }
.chats { margin: 9px 0 0 23px; width: 217px; height: 77px; border-top: 1px solid #dedede; border-right: 8px solid #bdbdbd; font: 13px/19px "Liberation Sans", Arial, sans-serif; color: #777; display: flex; justify-content: center; padding-top: 20px; }
.chats a { display: inline; color: #4100c8; }
.sfoot { display: flex; height: 32px; }
.sfoot div { width: 37px; height: 32px; display: grid; place-items: center; padding-top: 2px; }
.sfoot div:first-child { margin-left: 91px; }
.sfoot .cur { background: #f3f3f3; box-shadow: inset 0 0 3px #ddd; padding-right: 1px; }

/* message pane */
.mail { width: 982px; flex: none; display: flex; flex-direction: column; }
.mtools { height: 48px; width: 966px; border-bottom: 1px solid #ebebeb; display: flex; align-items: center; padding-left: 4px; flex: none; }
.c { width: 44px; display: grid; place-items: center; }
.c svg { width: 20px; height: 20px; fill: #6f6f6f; }
.c.first { margin-left: 12px; }
.c.narrow { width: 36px; }
.sep { width: 1px; height: 20px; background: #e4e4e4; margin: 0 8px 0 7px; }
.count { margin-left: auto; font-size: 12px; color: #5f6368; letter-spacing: .3px; margin-right: 10px; }
.c.pg { width: 40px; }
.mtools .pg:last-child { margin-right: 6px; }
.scroller { flex: 1; min-height: 0; display: flex; overflow: hidden; }
.thread { width: 950px; flex: none; }
.bar { margin-left: 21px; width: 11px; flex: none; }
.bar i { display: block; height: 439px; background: #cbcbcb; border: solid #aaa; border-width: 1px 0 1px 1px; }
.subject { height: 68px; display: flex; align-items: center; padding-left: 72px; margin-right: -8px; }
.subject h2 { font: 400 22px/28px Roboto, sans-serif; letter-spacing: -.05px; color: #202124; flex: 1; }
.c.s { width: 36px; }
.msg { display: flex; padding-left: 16px; }
.avatar { width: 40px; height: 40px; border-radius: 20px; background: #f2f2f2; border: 1px solid #dedede; display: grid; place-items: center; margin-right: 16px; fill: #ccc; flex: none; }
.txt { width: 878px; }
.avatar svg { width: 20px; height: 20px; }
.line { display: flex; align-items: center; height: 20px; font-size: 12px; color: #5f6368; letter-spacing: .31px; }
.line b { font: 700 14px/20px Roboto, sans-serif; color: #202124; letter-spacing: .15px; }
.addr { margin-left: 4px; }
.line time { margin-left: auto; margin-right: 20px; }
.st { width: 20px; height: 20px; fill: #6f6f6f; }
.st + .st { margin-left: 20px; }
.snip { font: 13px/20px "Liberation Sans", Arial, sans-serif; color: #5f6368; letter-spacing: .2px; white-space: nowrap; }
.m1 { padding-top: 8px; height: 68px; }
.fold { height: 40px; padding-left: 16px; background: linear-gradient(#e9ecef, #e9ecef) 0 17px / 100% 1px no-repeat, linear-gradient(#e9ecef, #e9ecef) 0 22px / 100% 1px no-repeat; }
.fold span { display: block; width: 40px; height: 40px; border: 1px solid #d8d8dc; border-radius: 20px; background: #fff; text-align: center; font: 500 12px/38px Roboto, sans-serif; color: #5f6368; }
.m2 { padding-top: 20px; height: 81px; border-bottom: 1px solid #e9ecef; }
.m3 { padding-top: 20px; }
.to { font-size: 12px; line-height: 20px; color: #5f6368; letter-spacing: .31px; display: flex; align-items: center; gap: 6px; }
.body { margin-top: 8px; font: 13px/19px "Liberation Sans", Arial, sans-serif; color: #222; }
.q { color: #6c006c; }
.q a { color: #3711c8; text-decoration: underline; }
.replies { display: flex; gap: 12px; margin-top: 38px; }
.rb { height: 36px; border: 1px solid #d2d2d8; border-radius: 4px; }
.reply { width: 104px; } .forward { width: 112px; }

/* add-on rail */
.addons { flex: 1; border-left: 1px solid #ebebeb; display: flex; flex-direction: column; align-items: center; padding-top: 18px; }
.addons svg { width: 20px; height: 20px; margin-bottom: 36px; fill: #5f6368; }
.addons hr { width: 20px; height: 1px; border: 0; background: #d5d5db; margin-bottom: 34px; flex: none; margin-top: -2px; }
.addons .g1 { margin-bottom: auto; }
.addons .g2 { margin-bottom: 18px; }
.cal { font: bold 9px Roboto, sans-serif; fill: #5b52f5; }
.fav-r { font: 11px Roboto, sans-serif; fill: #fff; }
```
